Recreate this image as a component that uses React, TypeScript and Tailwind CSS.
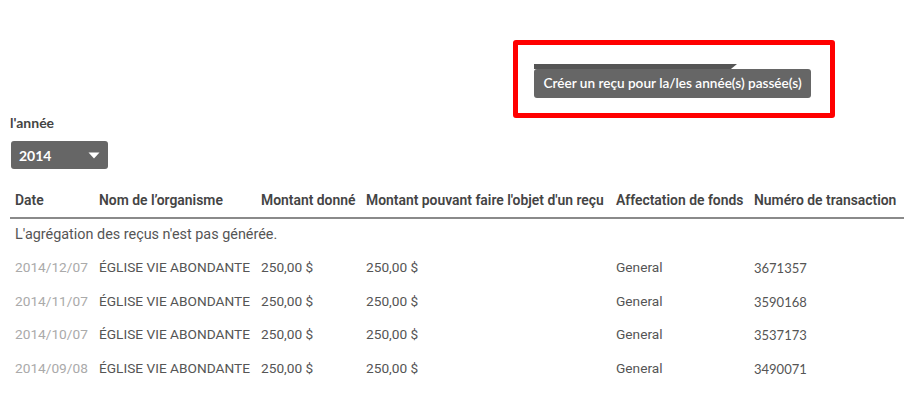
import React from 'react'

const rows = [
  { date: '2014/12/07', txn: '3671357' },
  { date: '2014/11/07', txn: '3590168' },
  { date: '2014/10/07', txn: '3537173' },
  { date: '2014/09/08', txn: '3490071' },
]

export default function App() {
  return (
    <div className="w-[912px] h-[393px] bg-white overflow-hidden font-['Roboto',sans-serif]">
      {/* highlighted action */}
      <div className="h-[113px] pt-[40px] pl-[513px]">
        <div className="w-[322px] h-[78px] border-[5px] border-[#ff0000] rounded-[3px] pl-[16px] pt-[19px]">
          <div className="w-[203px] h-[5px] bg-[#555] [clip-path:polygon(0_0,100%_0,97%_100%,0_100%)]" />
          <button className="w-[277px] h-[29px] bg-[#666] rounded-[3px] text-white text-[13.6px] font-['Lato',sans-serif] font-semibold">
            Créer un reçu pour la/les année(s) passée(s)
          </button>
        </div>
      </div>

      <div className="px-[10px]">
        <div className="text-[14px] font-bold text-[#444] font-['Lato',sans-serif] leading-[20px]">l'année</div>
        <div className="mt-[8px] ml-[1px] w-[97px] h-[28px] bg-[#666] rounded-[3px] flex items-center justify-between pl-[8px] pr-[8px] text-white">
          <span className="text-[14px] font-bold font-['Lato',sans-serif]">2014</span>
          <svg width="12" height="7" viewBox="0 0 12 7">
            <path d="M0.5 0.5h11L6 6.5z" fill="#fff" />
          </svg>
        </div>

        <table className="mt-[14px] w-[894px] table-fixed border-collapse text-[13.7px]">
          <colgroup>
            <col className="w-[84px]" />
            <col className="w-[162px]" />
            <col className="w-[105px]" />
            <col className="w-[250px]" />
            <col className="w-[138px]" />
            <col className="w-[155px]" />
          </colgroup>
          <thead>
            <tr className="h-[35px] border-b-2 border-[#8a8a8a] text-left text-[#444] text-[13.9px] whitespace-nowrap">
              <th className="pl-[5px] font-semibold">Date</th>
              <th className="pl-[5px] font-semibold">Nom de l’organisme</th>
              <th className="pl-[5px] font-semibold">Montant donné</th>
              <th className="pl-[5px] font-semibold">Montant pouvant faire l'objet d'un reçu</th>
              <th className="pl-[5px] font-semibold">Affectation de fonds</th>
              <th className="pl-[5px] font-semibold">Numéro de transaction</th>
            </tr>
          </thead>
          <tbody className="text-[#555]">
            <tr className="h-[33px]">
              <td colSpan={6} className="pl-[5px] text-[14.4px]">L'agrégation des reçus n'est pas générée.</td>
            </tr>
            {rows.map((r) => (
              <tr key={r.txn} className="h-[33.5px] whitespace-nowrap">
                <td className="pl-[5px] text-[#aaa]">{r.date}</td>
                <td className="pl-[5px]">ÉGLISE VIE ABONDANTE</td>
                <td className="pl-[5px]">250,00 $</td>
                <td className="pl-[5px]">250,00 $</td>
                <td className="pl-[5px]">General</td>
                <td className="pl-[5px] font-['Lato',sans-serif] text-[13px] pt-[2px]">{r.txn}</td>
              </tr>
            ))}
          </tbody>
        </table>
      </div>
    </div>
  )
}
